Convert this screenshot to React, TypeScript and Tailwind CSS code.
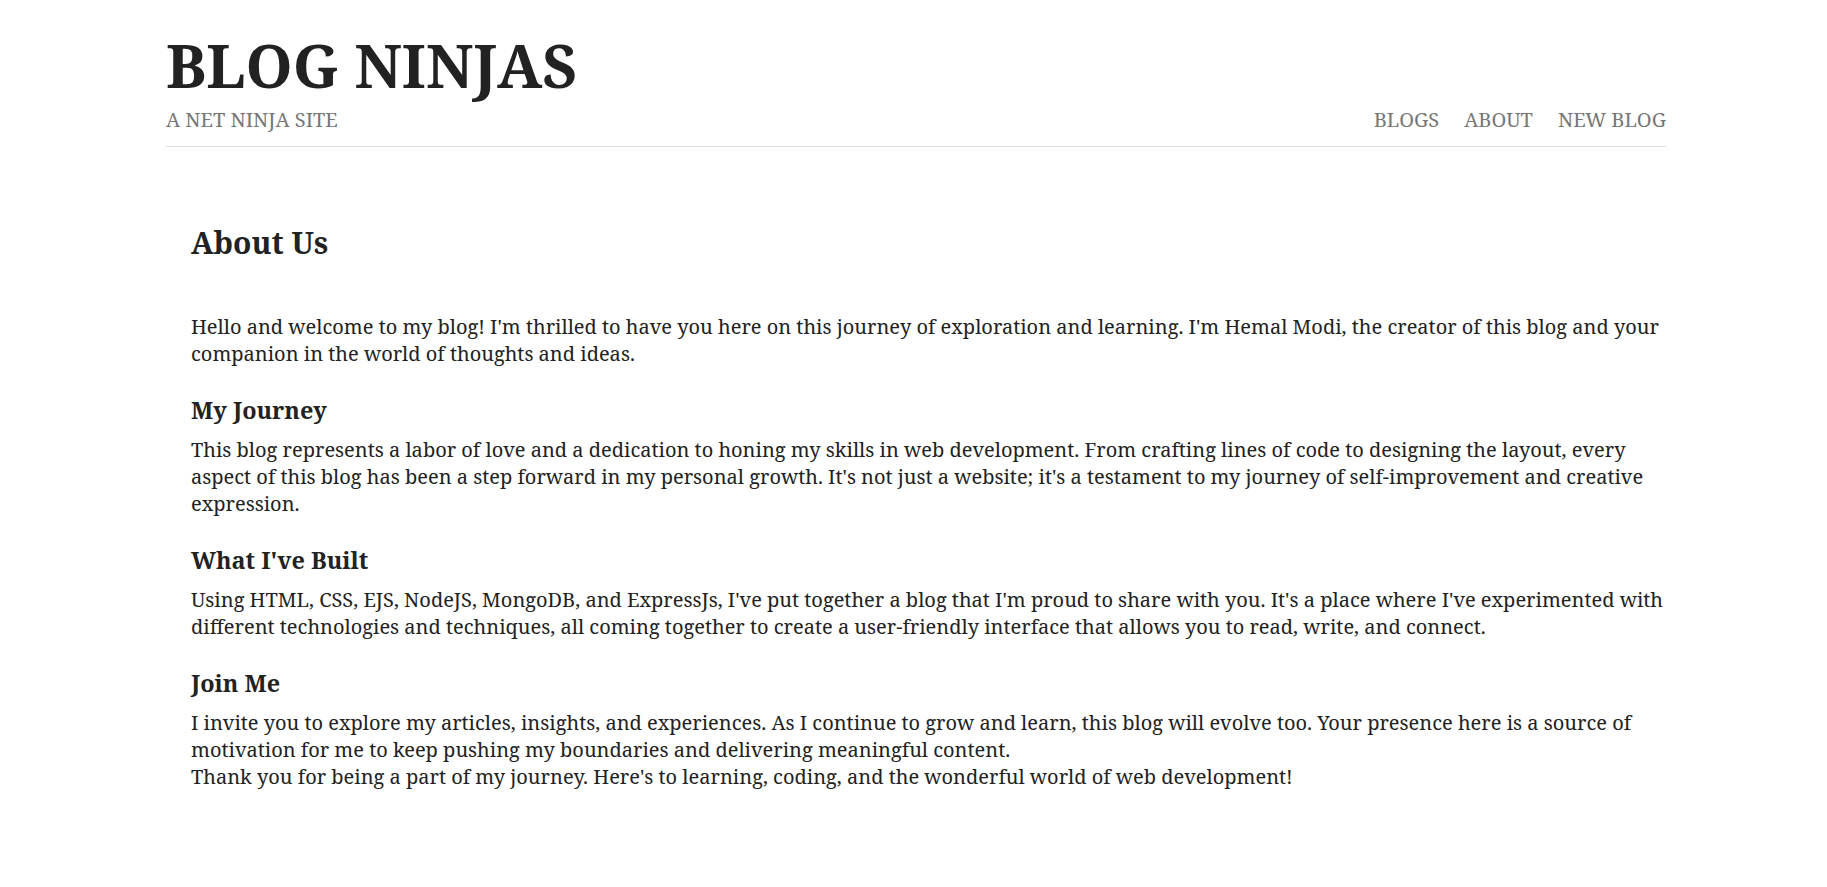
const navLinks = ["Blogs", "About", "New Blog"];

export default function App() {
  return (
    <div
      className="min-h-screen bg-white text-[#222]"
      style={{ fontFamily: '"Noto Serif", "DejaVu Serif", "Liberation Serif", serif' }}
    >
      <div className="ml-[166px] w-[1500px] pt-[24px]">
        {/* Header */}
        <nav className="flex items-end justify-between border-b border-[#ddd] pb-[13px] uppercase">
          <div>
            <h1 className="text-[60px] font-bold leading-[82px] text-[#222]">Blog Ninjas</h1>
            <p className="text-[20px] leading-[27px] text-[#777]">A Net Ninja Site</p>
          </div>
          <ul className="flex gap-[25px]">
            {navLinks.map((l) => (
              <li key={l}>
                <a href="#" className="text-[20px] leading-[27px] text-[#777]">
                  {l}
                </a>
              </li>
            ))}
          </ul>
        </nav>

        {/* About content */}
        <main className="pl-[25px] pt-[76px]">
          <h2 className="text-[30px] font-bold leading-[40px]">About Us</h2>

          <div className="mt-[50px] text-[20px] leading-[27px]">
            <p>
              Hello and welcome to my blog! I'm thrilled to have you here on this journey of exploration and
              learning. I'm Hemal Modi, the creator of this blog and your companion in the world of thoughts and
              ideas.
            </p>

            <h3 className="mt-[27px] mb-[10px] text-[23.4px] font-bold leading-[32px]">My Journey</h3>
            <p>
              This blog represents a labor of love and a dedication to honing my skills in web development. From
              crafting lines of code to designing the layout, every aspect of this blog has been a step forward in
              my personal growth. It's not just a website; it's a testament to my journey of self-improvement and
              creative expression.
            </p>

            <h3 className="mt-[27px] mb-[10px] text-[23.4px] font-bold leading-[32px]">What I've Built</h3>
            <p>
              Using HTML, CSS, EJS, NodeJS, MongoDB, and ExpressJs, I've put together a blog that I'm proud to share
              with you. It's a place where I've experimented with different technologies and techniques, all coming
              together to create a user-friendly interface that allows you to read, write, and connect.
            </p>

            <h3 className="mt-[27px] mb-[10px] text-[23.4px] font-bold leading-[32px]">Join Me</h3>
            <p>
              I invite you to explore my articles, insights, and experiences. As I continue to grow and learn, this
              blog will evolve too. Your presence here is a source of motivation for me to keep pushing my
              boundaries and delivering meaningful content.
            </p>
            <p>
              Thank you for being a part of my journey. Here's to learning, coding, and the wonderful world of web
              development!
            </p>
          </div>
        </main>
      </div>
    </div>
  );
}
